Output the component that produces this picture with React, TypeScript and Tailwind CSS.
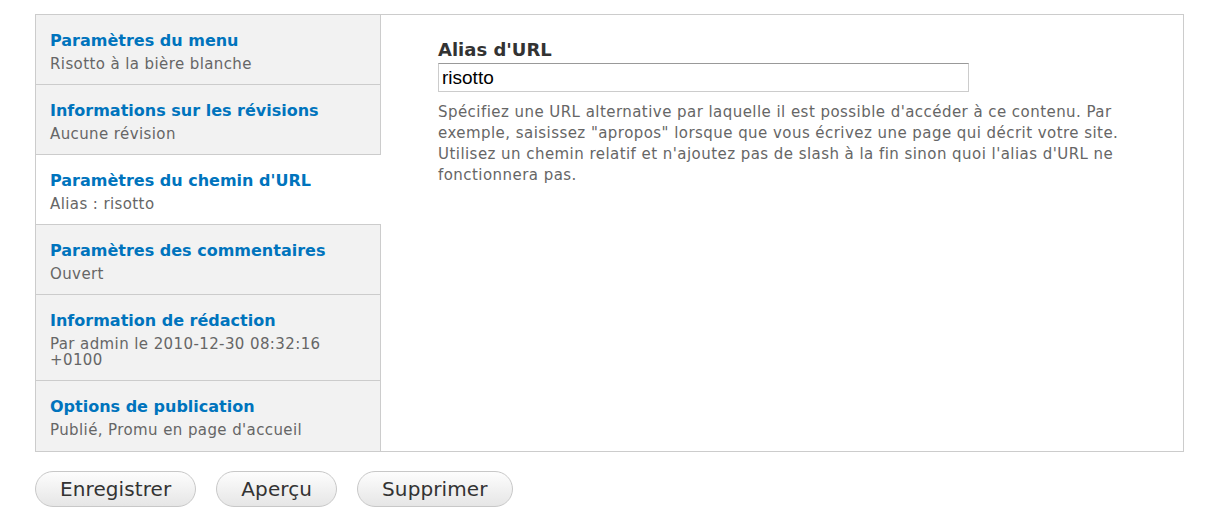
import React from 'react';

const tabs = [
  { title: 'Paramètres du menu', summary: 'Risotto à la bière blanche' },
  { title: 'Informations sur les révisions', summary: 'Aucune révision' },
  { title: "Paramètres du chemin d'URL", summary: 'Alias : risotto', active: true },
  { title: 'Paramètres des commentaires', summary: 'Ouvert' },
  { title: 'Information de rédaction', summary: 'Par admin le 2010-12-30 08:32:16 +0100' },
  { title: 'Options de publication', summary: "Publié, Promu en page d'accueil" },
];

const font = "font-['DejaVu_Sans',Verdana,sans-serif]";

export default function App() {
  return (
    <div className={`min-h-[527px] bg-white px-[35px] pt-[14px] ${font}`}>
      <div className="flex border border-[#ccc]">
        <ul className="w-[345px] shrink-0">
          {tabs.map((t) => (
            <li
              key={t.title}
              className={`border-b border-[#ccc] pl-[14px] pr-[15px] pt-[16px] pb-[12px] last:border-b-0 last:pb-[13px] ${
                t.active ? 'bg-white' : 'border-r bg-[#f2f2f2]'
              }`}
            >
              <div className="text-[16px] font-bold leading-[20px] text-[#0074bd]">{t.title}</div>
              <div className="mt-[5px] pr-[20px] text-[15px] leading-[16px] tracking-[0.4px] text-[#666]">
                {t.summary}
              </div>
            </li>
          ))}
        </ul>
        <div className="flex-1 pl-[57px] pr-[33px] pt-[22px]">
          <label className="block text-[18px] font-bold leading-[26px] text-[#333]">Alias d'URL</label>
          <input
            readOnly
            value="risotto"
            className="block h-[29px] w-[531px] border border-[#ccc] border-t-[#999] px-[3px] font-['Liberation_Sans',Arial,sans-serif] text-[19px] text-black outline-none"
          />
          <p className="mt-[10px] text-[15px] leading-[21px] tracking-[0.45px] text-[#666]">
            Spécifiez une URL alternative par laquelle il est possible d'accéder à ce contenu. Par exemple, saisissez
            "apropos" lorsque que vous écrivez une page qui décrit votre site. Utilisez un chemin relatif et
            n'ajoutez pas de slash à la fin sinon quoi l'alias d'URL ne fonctionnera pas.
          </p>
        </div>
      </div>
      <div className="mt-[19px] flex gap-[20px]">
        {['Enregistrer', 'Aperçu', 'Supprimer'].map((b) => (
          <button
            key={b}
            className="h-[36px] rounded-full border border-[#c8c8c8] bg-gradient-to-b from-[#fdfdfd] to-[#e6e6e6] px-[24px] text-[20px] tracking-[0.1px] text-[#333]"
          >
            {b}
          </button>
        ))}
      </div>
    </div>
  );
}
